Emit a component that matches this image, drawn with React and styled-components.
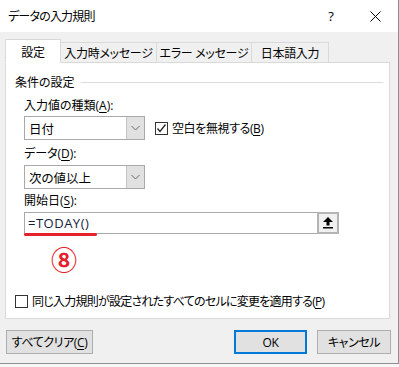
import React from 'react'
import styled, { createGlobalStyle } from 'styled-components'

const GlobalStyle = createGlobalStyle`
  html, body {
    margin: 0;
    padding: 0;
    background: #ffffff;
  }
  body {
    font-family: "Open Sans", "Noto Sans CJK JP", sans-serif;
    font-size: 12px;
    color: #000;
    font-feature-settings: "palt";
  }
`

const Window = styled.div`
  width: 398px;
  height: 363px;
  background: #f0f0f0;
  border-right: 1px solid #8f8f8f;
  display: flex;
  flex-direction: column;
`

const TitleBar = styled.div`
  height: 32px;
  background: #ffffff;
  display: flex;
  align-items: center;
  padding-left: 8px;
  font-size: 12px;
`

const Title = styled.div`
  flex: 1;
  letter-spacing: -0.8px;
`

const Help = styled.div`
  width: 46px;
  padding-left: 4px;
  box-sizing: border-box;
  text-align: center;
  font-size: 13px;
`

const Close = styled.div`
  width: 46px;
  height: 32px;
  display: flex;
  align-items: center;
  justify-content: center;
`

const Body = styled.div`
  padding: 8px 8px 0 5px;
  display: flex;
  flex-direction: column;
`

const TabRow = styled.div`
  display: flex;
  align-items: flex-end;
  height: 23px;
  margin-bottom: -1px;
  position: relative;
  z-index: 1;
`

const Tab = styled.div`
  width: ${p => p.w}px;
  height: ${p => (p.active ? 24 : 21)}px;
  box-sizing: border-box;
  border: 1px solid #d9d9d9;
  border-left: ${p => (p.first ? '1px solid #d9d9d9' : 'none')};
  border-bottom: ${p => (p.active ? '1px solid #ffffff' : '1px solid #d9d9d9')};
  background: ${p => (p.active ? '#ffffff' : '#f0f0f0')};
  display: flex;
  align-items: center;
  justify-content: center;
  padding-top: ${p => (p.active ? 1 : 0)}px;
  white-space: nowrap;
  letter-spacing: -0.3px;
`

const Panel = styled.div`
  height: 257px;
  box-sizing: border-box;
  background: #ffffff;
  border: 1px solid #d9d9d9;
  width: 385px;
  padding: 11px 0 8px 9px;
  display: flex;
  flex-direction: column;
`

const GroupHead = styled.div`
  display: flex;
  align-items: center;
  height: 16px;
  &::after {
    content: '';
    flex: 1;
    height: 1px;
    background: #dcdcdc;
    margin: 0 6px 0 6px;
  }
`

const Fields = styled.div`
  padding-left: 9px;
  display: flex;
  flex-direction: column;
`

const Label = styled.div`
  height: 16px;
  line-height: 16px;
  margin-top: ${p => p.mt || 0}px;
  margin-bottom: ${p => p.mb || 0}px;
  u {
    text-decoration: underline;
    text-underline-offset: 2px;
  }
`

const Row = styled.div`
  display: flex;
  align-items: center;
  gap: 10px;
`

const Combo = styled.div`
  width: 121px;
  height: 24px;
  box-sizing: border-box;
  border: 1px solid #a9a9a9;
  display: flex;
  background: #ffffff;
`

const ComboText = styled.div`
  flex: 1;
  padding-left: 4px;
  display: flex;
  align-items: center;
  font-size: 12.5px;
`

const DropButton = styled.div`
  width: 17px;
  background: #e1e1e1;
  border-left: 1px solid #c4c4c4;
  display: flex;
  align-items: center;
  justify-content: center;
`

const CheckLine = styled.label`
  display: flex;
  align-items: center;
  gap: 4px;
  letter-spacing: ${p => (p.tight ? '-0.75px' : '-0.4px')};
  u {
    text-decoration: underline;
    text-underline-offset: 2px;
  }
`

const Box = styled.span`
  width: 13px;
  height: 13px;
  box-sizing: border-box;
  border: 1px solid #333333;
  background: #ffffff;
  display: flex;
  align-items: center;
  justify-content: center;
`

const InputWrap = styled.div`
  position: relative;
  width: 315px;
`

const Input = styled.div`
  height: 22px;
  box-sizing: border-box;
  border: 1px solid #a9a9a9;
  display: flex;
  background: #ffffff;
`

const InputText = styled.div`
  flex: 1;
  display: flex;
  align-items: center;
  padding-left: 3px;
  font-size: 13px;
  letter-spacing: 0.5px;
  color: #14213d;
`

const UpButton = styled.div`
  width: 22px;
  height: 22px;
  margin: -1px -1px 0 0;
  box-sizing: border-box;
  border: 2px solid #b4b4b4;
  background: #f0f0f0;
  display: flex;
  align-items: center;
  justify-content: center;
`

const RedLine = styled.div`
  position: absolute;
  left: 0;
  top: 21px;
  width: 73px;
  height: 3px;
  border-radius: 2px;
  background: #e5212b;
`

const Marker = styled.div`
  margin: 12px 0 0 27px;
  height: 26px;
  line-height: 26px;
  font-family: "Noto Sans CJK JP", sans-serif;
  font-size: 26px;
  font-weight: 700;
  color: #e5212b;
`

const BottomCheck = styled.div`
  margin-top: auto;
`

const Footer = styled.div`
  display: flex;
  align-items: center;
  padding: 11px 7px 0 6px;
  gap: 10px;
`

const Button = styled.div`
  width: ${p => p.w}px;
  height: 24px;
  box-sizing: border-box;
  border: ${p => (p.primary ? '2px solid #0078d7' : '1px solid #adadad')};
  background: #e1e1e1;
  display: flex;
  align-items: center;
  justify-content: center;
  margin-left: ${p => (p.push ? 'auto' : '0')};
  letter-spacing: -0.4px;
  u {
    text-decoration: underline;
    text-underline-offset: 2px;
  }
`

const Sheet = styled.div`
  height: 3px;
  border-top: 1px solid #8f8f8f;
  background: #f7f7f7;
`

const Chevron = () => (
  <svg width="9" height="6" viewBox="0 0 9 6">
    <polyline points="0.5,1 4.5,5 8.5,1" fill="none" stroke="#6b6b6b" strokeWidth="1" />
  </svg>
)

const Check = () => (
  <svg width="11" height="11" viewBox="0 0 11 11">
    <polyline points="1.5,5.5 4,8.5 9.5,1.5" fill="none" stroke="#222" strokeWidth="1.3" />
  </svg>
)

const ArrowUp = () => (
  <svg width="10" height="12" viewBox="0 0 10 12">
    <polygon points="5,0 10,5 6.5,5 6.5,8.5 3.5,8.5 3.5,5 0,5" fill="#000" />
    <rect x="0" y="10" width="10" height="1.5" fill="#000" />
  </svg>
)

const CloseIcon = () => (
  <svg width="11" height="11" viewBox="0 0 11 11">
    <path d="M0.5 0.5 L10.5 10.5 M10.5 0.5 L0.5 10.5" stroke="#000" strokeWidth="1" />
  </svg>
)

export default function App() {
  return (
    <>
      <GlobalStyle />
      <Window>
        <TitleBar>
          <Title>データの入力規則</Title>
          <Help>?</Help>
          <Close><CloseIcon /></Close>
        </TitleBar>
        <Body>
          <TabRow>
            <Tab w={56} first active>設定</Tab>
            <Tab w={96}>入力時メッセージ</Tab>
            <Tab w={95}>エラー メッセージ</Tab>
            <Tab w={77}>日本語入力</Tab>
          </TabRow>
          <Panel>
            <GroupHead>条件の設定</GroupHead>
            <Fields>
              <Label mt={8} mb={2}>入力値の種類(<u>A</u>):</Label>
              <Row>
                <Combo>
                  <ComboText>日付</ComboText>
                  <DropButton><Chevron /></DropButton>
                </Combo>
                <CheckLine>
                  <Box><Check /></Box>
                  <span>空白を無視する(<u>B</u>)</span>
                </CheckLine>
              </Row>
              <Label mt={6} mb={3}>データ(<u>D</u>):</Label>
              <Combo>
                <ComboText>次の値以上</ComboText>
                <DropButton><Chevron /></DropButton>
              </Combo>
              <Label mt={4} mb={3}>開始日(<u>S</u>):</Label>
              <InputWrap>
                <Input>
                  <InputText>=TODAY()</InputText>
                  <UpButton><ArrowUp /></UpButton>
                </Input>
                <RedLine />
              </InputWrap>
              <Marker>⑧</Marker>
            </Fields>
            <BottomCheck>
              <CheckLine tight>
                <Box />
                <span>同じ入力規則が設定されたすべてのセルに変更を適用する(<u>P</u>)</span>
              </CheckLine>
            </BottomCheck>
          </Panel>
        </Body>
        <Footer>
          <Button w={87}>すべてクリア(<u>C</u>)</Button>
          <Button w={73} primary push>OK</Button>
          <Button w={74}>キャンセル</Button>
        </Footer>
      </Window>
      <Sheet />
    </>
  )
}
